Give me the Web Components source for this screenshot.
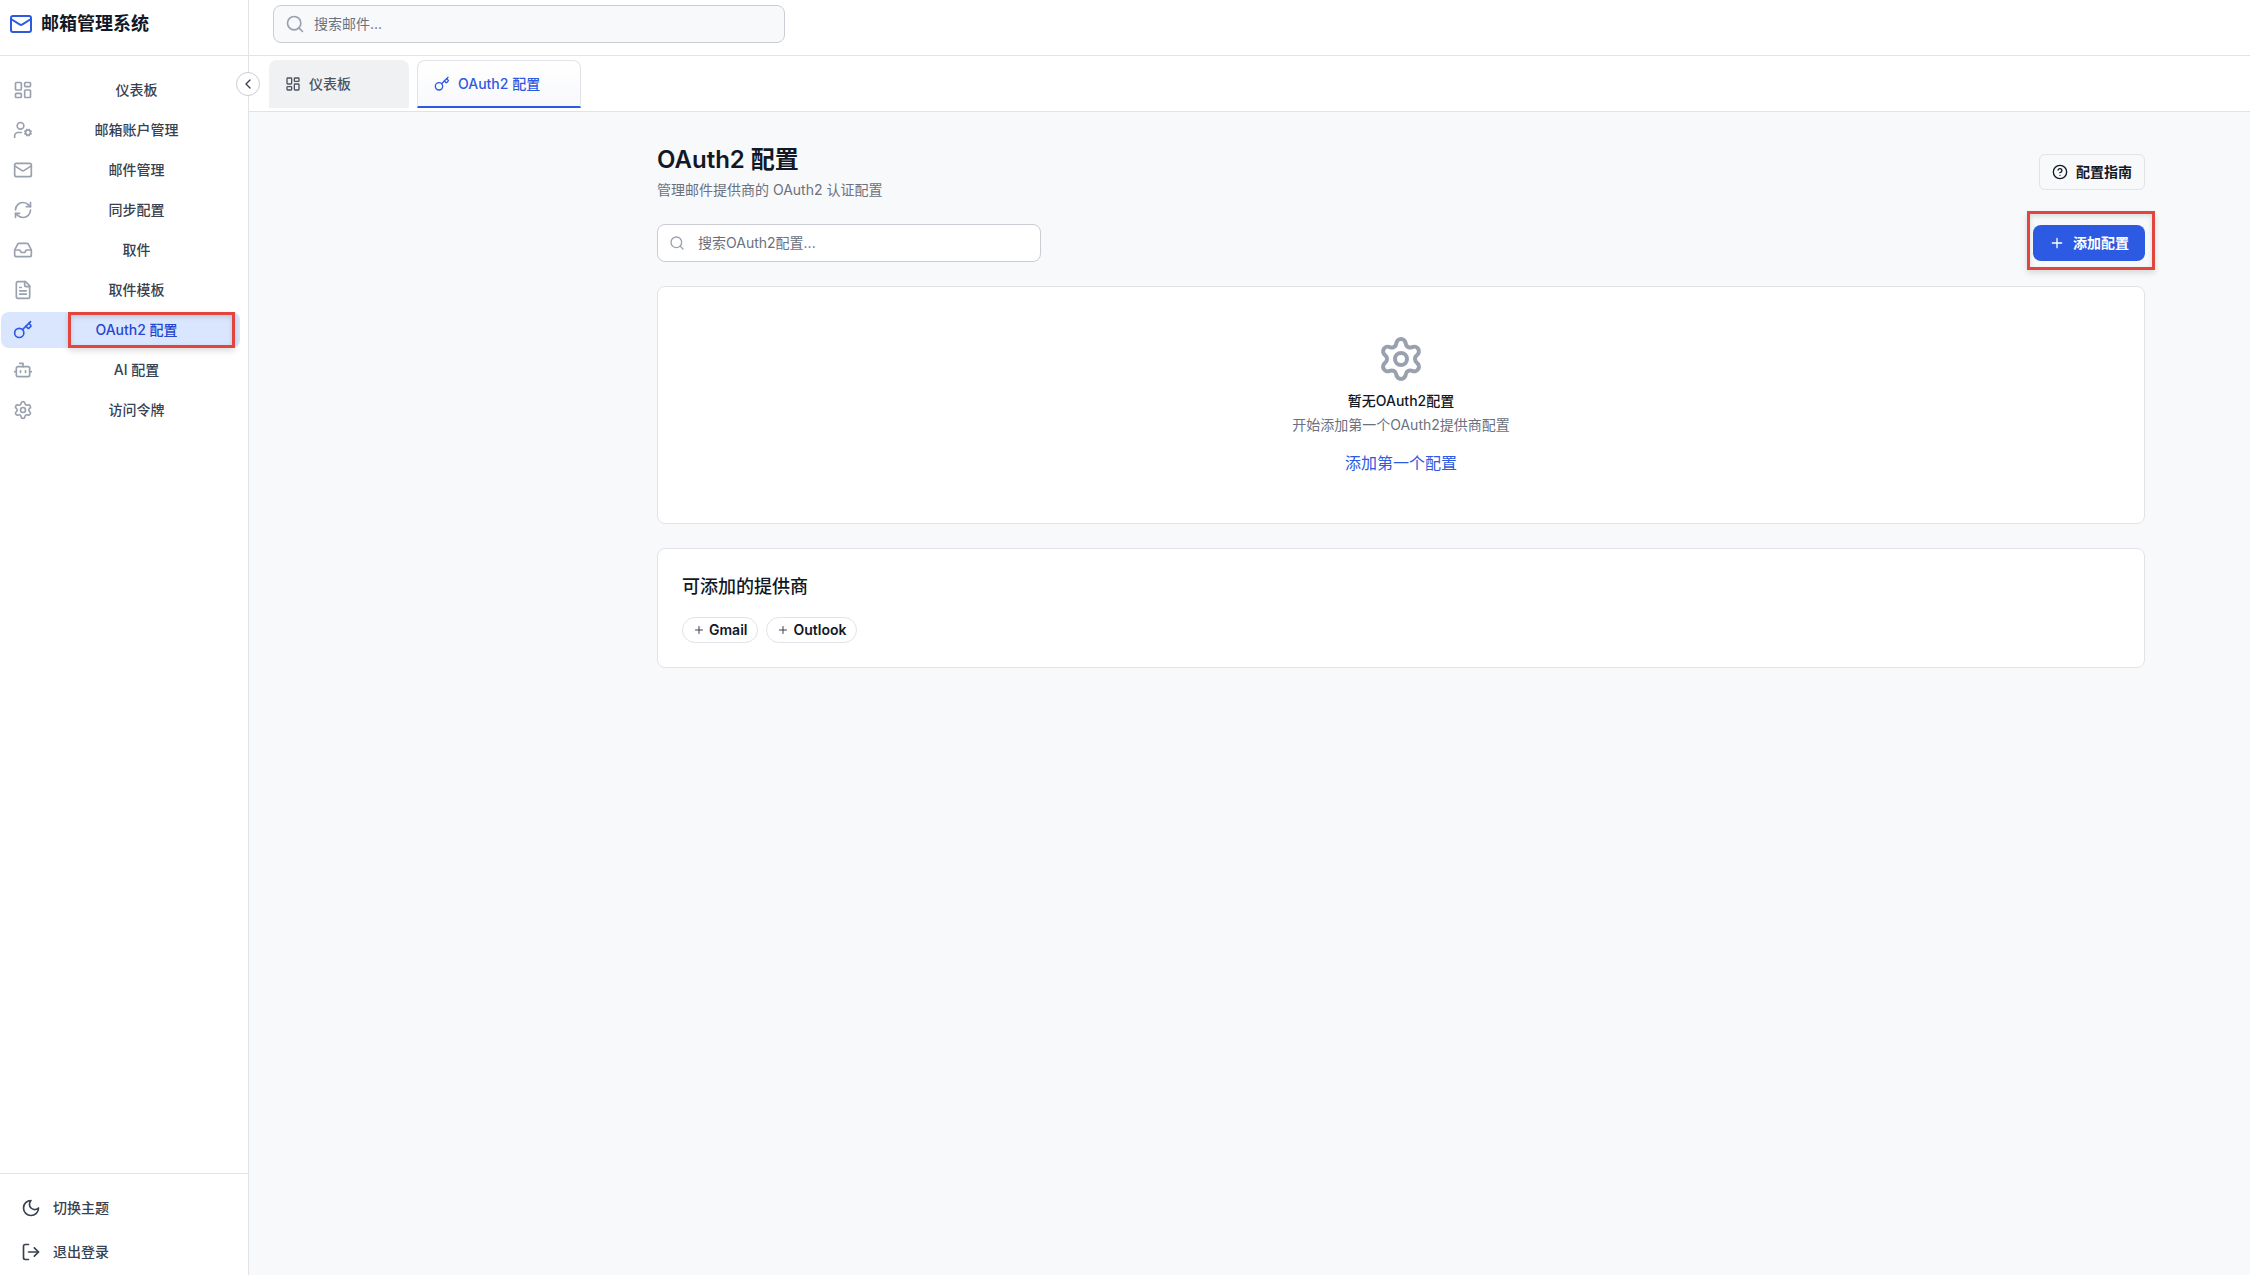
<!DOCTYPE html>
<html lang="zh-CN">
<head>
<meta charset="utf-8">
<title>邮箱管理系统</title>
<style>
  :root {
    --blue: #2d5ae2;
    --blue-deep: #2746d0;
    --blue-soft: #dae6fd;
    --ink: #121826;
    --ink-2: #384150;
    --ink-3: #6a7180;
    --ink-4: #9aa1ae;
    --line: #e2e3e8;
    --line-strong: #cbccd4;
    --ground: #f8f9fb;
    --mark: #e2443e;
  }
  body {
    margin: 0;
    font: 400 14px/20px Inter, "Noto Sans CJK SC", sans-serif;
    color: var(--ink);
    background: var(--ground);
  }
</style>
</head>
<body>
<mail-app></mail-app>
<script>
const ICONS = {
  mail: '<rect x="2" y="4" width="20" height="16" rx="2"/><path d="m22 7-8.97 5.7a1.94 1.94 0 0 1-2.06 0L2 7"/>',
  dashboard: '<rect x="3" y="3" width="7" height="9" rx="1"/><rect x="14" y="3" width="7" height="5" rx="1"/><rect x="14" y="12" width="7" height="9" rx="1"/><rect x="3" y="16" width="7" height="5" rx="1"/>',
  usercog: '<path d="M10 15H6a4 4 0 0 0-4 4v2"/><circle cx="9" cy="7" r="4"/><circle cx="18" cy="15" r="3"/><path d="m14.305 16.53.923-.382M15.228 13.852l-.923-.383M16.852 12.228l-.383-.923M16.852 17.772l-.383.924M19.148 12.228l.383-.923M19.53 18.696l-.382-.924M20.772 13.852l.924-.383M20.772 16.148l.924.383"/>',
  refresh: '<path d="M3 12a9 9 0 0 1 9-9 9.75 9.75 0 0 1 6.74 2.74L21 8"/><path d="M21 3v5h-5"/><path d="M21 12a9 9 0 0 1-9 9 9.75 9.75 0 0 1-6.74-2.74L3 16"/><path d="M8 16H3v5"/>',
  inbox: '<path d="M22 12h-6l-2 3h-4l-2-3H2"/><path d="M5.45 5.11 2 12v6a2 2 0 0 0 2 2h16a2 2 0 0 0 2-2v-6l-3.45-6.89A2 2 0 0 0 16.76 4H7.24a2 2 0 0 0-1.79 1.11z"/>',
  file: '<path d="M15 2H6a2 2 0 0 0-2 2v16a2 2 0 0 0 2 2h12a2 2 0 0 0 2-2V7Z"/><path d="M14 2v4a2 2 0 0 0 2 2h4"/><path d="M10 9H8M16 13H8M16 17H8"/>',
  key: '<path d="m15.5 7.5 2.3 2.3a1 1 0 0 0 1.4 0l2.1-2.1a1 1 0 0 0 0-1.4L19 4"/><path d="m21 2-9.6 9.6"/><circle cx="7.5" cy="15.5" r="5.5"/>',
  bot: '<path d="M12 8V4H8"/><rect x="4" y="8" width="16" height="12" rx="2"/><path d="M2 14h2M20 14h2M15 13v2M9 13v2"/>',
  gear: '<path d="M9.671 4.136a2.34 2.34 0 0 1 4.659 0 2.34 2.34 0 0 0 3.319 1.915 2.34 2.34 0 0 1 2.33 4.033 2.34 2.34 0 0 0 0 3.831 2.34 2.34 0 0 1-2.33 4.033 2.34 2.34 0 0 0-3.319 1.915 2.34 2.34 0 0 1-4.659 0 2.34 2.34 0 0 0-3.32-1.915 2.34 2.34 0 0 1-2.33-4.033 2.34 2.34 0 0 0 0-3.831A2.34 2.34 0 0 1 6.35 6.051a2.34 2.34 0 0 0 3.319-1.915"/><circle cx="12" cy="12" r="3"/>',
  search: '<circle cx="11" cy="11" r="8"/><path d="m21 21-4.34-4.34"/>',
  help: '<circle cx="12" cy="12" r="10"/><path d="M9.09 9a3 3 0 0 1 5.83 1c0 2-3 3-3 3"/><path d="M12 17h.01"/>',
  plus: '<path d="M5 12h14M12 5v14"/>',
  moon: '<path d="M12 3a6 6 0 0 0 9 9 9 9 0 1 1-9-9Z"/>',
  logout: '<path d="m16 17 5-5-5-5"/><path d="M21 12H9"/><path d="M9 21H5a2 2 0 0 1-2-2V5a2 2 0 0 1 2-2h4"/>',
  left: '<path d="m15 18-6-6 6-6"/>'
};

const BASE = `
  *, *::before, *::after { box-sizing: border-box; }
  button, input { font: inherit; color: inherit; margin: 0; }
  button { cursor: pointer; }
  h1, h2, h3, p { margin: 0; }
`;

function define(name, css, html) {
  customElements.define(name, class extends HTMLElement {
    constructor() {
      super();
      this.attachShadow({ mode: "open" });
    }
    connectedCallback() {
      const body = typeof html === "function" ? html(this) : html;
      this.shadowRoot.innerHTML = `<style>${BASE}${css}</style>${body}`;
    }
  });
}

define("ui-icon", `
  :host { display: block; flex: none; width: var(--size, 20px); height: var(--size, 20px); }
  svg { display: block; width: 100%; height: 100%; }
`, el => `<svg viewBox="0 0 24 24" fill="none" stroke="currentColor" stroke-width="2" stroke-linecap="round" stroke-linejoin="round" aria-hidden="true">${ICONS[el.getAttribute("name")]}</svg>`);

define("search-field", `
  :host { display: block; }
  label {
    display: flex; align-items: center; gap: var(--field-gap, 9px);
    height: 38px; padding: 0 11px;
    border: 1px solid var(--line-strong); border-radius: 8px;
    background: var(--field-bg, #fff);
  }
  ui-icon { color: var(--ink-4); --size: var(--field-icon, 20px); }
  input { flex: 1; min-width: 0; height: 36px; padding: 0 0 2px; border: 0; outline: 0; background: none; }
  input::placeholder { color: var(--ink-3); opacity: 1; }
`, el => `<label><ui-icon name="search"></ui-icon><input type="search" aria-label="${el.getAttribute("hint")}" placeholder="${el.getAttribute("hint")}"></label>`);

define("nav-item", `
  :host { display: block; position: relative; }
  a {
    display: flex; align-items: center; gap: 12px;
    height: 36px; padding: 0 12px; border-radius: 8px;
    color: var(--ink-2); font-weight: 500; text-decoration: none;
  }
  ui-icon { color: var(--ink-4); }
  span { flex: 1; text-align: center; }
  :host([active]) a { background: var(--blue-soft); color: var(--blue-deep); }
  :host([active]) ui-icon { color: var(--blue); }
  :host([active])::after {
    content: ""; position: absolute; inset: 0 5px 0 67px;
    border: 3px solid var(--mark); box-shadow: 0 3px 6px #0002, inset 0 2px 5px #0002;
    pointer-events: none;
  }
`, el => `<a href="#"><ui-icon name="${el.getAttribute("icon")}"></ui-icon><span><slot></slot></span></a>`);

define("side-action", `
  :host { display: block; }
  button {
    display: flex; align-items: center; gap: 12px; width: 100%;
    height: 44px; padding: 0 12px; border: 0; background: none;
    color: var(--ink-2); font-weight: 500;
  }
`, el => `<button type="button"><ui-icon name="${el.getAttribute("icon")}"></ui-icon><slot></slot></button>`);

define("side-bar", `
  :host { display: flex; flex-direction: column; position: relative; background: #fff; border-right: 1px solid var(--line); }
  header { display: flex; align-items: center; gap: 8px; height: 56px; padding: 0 9px 8px; border-bottom: 1px solid var(--line); }
  header ui-icon { --size: 24px; color: var(--blue); }
  header strong { font-size: 18px; line-height: 28px; font-weight: 700; }
  nav { flex: 1; display: flex; flex-direction: column; gap: 4px; padding: 16px 8px 16px 1px; }
  footer { padding: 12px 8px 1px 9px; border-top: 1px solid var(--line); }
  .fold {
    position: absolute; top: 72px; right: -12px; z-index: 2;
    display: grid; place-items: center; width: 24px; height: 24px; padding: 0;
    border: 1px solid var(--line-strong); border-radius: 50%; background: #fff; color: var(--ink-2);
  }
  .fold ui-icon { --size: 16px; }
`, `
  <header><ui-icon name="mail"></ui-icon><strong>邮箱管理系统</strong></header>
  <button class="fold" type="button" aria-label="收起"><ui-icon name="left"></ui-icon></button>
  <nav>
    <nav-item icon="dashboard">仪表板</nav-item>
    <nav-item icon="usercog">邮箱账户管理</nav-item>
    <nav-item icon="mail">邮件管理</nav-item>
    <nav-item icon="refresh">同步配置</nav-item>
    <nav-item icon="inbox">取件</nav-item>
    <nav-item icon="file">取件模板</nav-item>
    <nav-item icon="key" active>OAuth2 配置</nav-item>
    <nav-item icon="bot">AI 配置</nav-item>
    <nav-item icon="gear">访问令牌</nav-item>
  </nav>
  <footer>
    <side-action icon="moon">切换主题</side-action>
    <side-action icon="logout">退出登录</side-action>
  </footer>
`);

define("page-tab", `
  :host { display: block; }
  button {
    display: flex; align-items: center; gap: 8px;
    min-width: 140px; height: 48px; padding: 0 40px 0 16px;
    border: 0; border-radius: 8px 8px 0 0;
    background: #f0f1f3; color: #4c5462; font-weight: 500;
  }
  ui-icon { --size: 16px; }
  :host([active]) button {
    border: 1px solid var(--line); border-bottom: 2px solid var(--blue); color: var(--blue);
    background: linear-gradient(#fff, #f8f9fb);
  }
`, el => `<button type="button"><ui-icon name="${el.getAttribute("icon")}"></ui-icon><slot></slot></button>`);

define("top-bar", `
  :host { display: block; background: #fff; }
  .search { height: 56px; padding: 5px 24px 0; border-bottom: 1px solid var(--line); }
  search-field { max-width: 512px; --field-bg: var(--ground); }
  .tabs { display: flex; gap: 8px; height: 56px; padding: 4px 20px 0; border-bottom: 1px solid var(--line); }
`, `
  <div class="search"><search-field hint="搜索邮件..."></search-field></div>
  <div class="tabs">
    <page-tab icon="dashboard">仪表板</page-tab>
    <page-tab icon="key" active>OAuth2 配置</page-tab>
  </div>
`);

define("action-button", `
  :host { display: block; position: relative; }
  button {
    display: flex; align-items: center; gap: 8px; height: 36px;
    padding: 0 12px; border: 1px solid var(--line); border-radius: 6px;
    background: none; font-weight: 600; white-space: nowrap;
  }
  ui-icon { --size: 16px; }
  :host([primary]) button { padding: 0 16px; border: 0; border-radius: 8px; background: var(--blue); color: #fff; }
  :host([primary])::after {
    content: ""; position: absolute; inset: -14px -10px -9px -6px;
    border: 3px solid var(--mark); box-shadow: 0 3px 6px #0002, inset 0 2px 5px #0002;
    pointer-events: none;
  }
`, el => `<button type="button"><ui-icon name="${el.getAttribute("icon")}"></ui-icon><slot></slot></button>`);

define("provider-chip", `
  :host { display: block; }
  button {
    display: flex; align-items: center; gap: 4px; height: 26px; padding: 0 10px;
    border: 1px solid var(--line); border-radius: 13px; background: #fff; font-weight: 600;
  }
  ui-icon { --size: 12px; color: var(--ink-2); }
`, `<button type="button"><ui-icon name="plus"></ui-icon><slot></slot></button>`);

define("ui-card", `
  :host { display: block; background: #fff; border: 1px solid var(--line); border-radius: 8px; padding: var(--card-pad, 24px); }
`, `<slot></slot>`);

define("oauth-page", `
  :host { display: block; padding: 32px 0 32px clamp(0px, 14vw - 12px, 303px); }
  .wrap { max-width: 1536px; margin: 0 auto; padding: 0 24px; display: flex; flex-direction: column; gap: 24px; }
  .row { display: flex; align-items: center; justify-content: space-between; }
  h1 { font-size: 24px; line-height: 32px; font-weight: 600; }
  .row p { margin-top: 4px; color: var(--ink-3); }
  search-field { width: 384px; --field-icon: 16px; --field-gap: 13px; }
  .empty { --card-pad: 48px; }
  .empty div { display: flex; flex-direction: column; align-items: center; }
  .empty ui-icon { --size: 48px; color: var(--ink-4); }
  h3 { margin-top: 8px; font-size: 14px; line-height: 20px; font-weight: 500; }
  .empty p { margin-top: 4px; color: var(--ink-3); }
  .link { margin-top: 16px; padding: 0; border: 0; background: none; font-size: 16px; line-height: 24px; color: var(--blue); }
  h2 { font-size: 18px; line-height: 28px; font-weight: 500; }
  .chips { display: flex; gap: 8px; margin-top: 16px; }
`, `
  <div class="wrap">
    <div class="row">
      <div><h1>OAuth2 配置</h1><p>管理邮件提供商的 OAuth2 认证配置</p></div>
      <action-button icon="help">配置指南</action-button>
    </div>
    <div class="row">
      <search-field hint="搜索OAuth2配置..."></search-field>
      <action-button icon="plus" primary>添加配置</action-button>
    </div>
    <ui-card class="empty"><div>
      <ui-icon name="gear"></ui-icon>
      <h3>暂无OAuth2配置</h3>
      <p>开始添加第一个OAuth2提供商配置</p>
      <button class="link" type="button">添加第一个配置</button>
    </div></ui-card>
    <ui-card>
      <h2>可添加的提供商</h2>
      <div class="chips"><provider-chip>Gmail</provider-chip><provider-chip>Outlook</provider-chip></div>
    </ui-card>
  </div>
`);

define("mail-app", `
  :host { display: flex; min-height: 100vh; }
  side-bar { flex: 0 0 249px; }
  main { flex: 1; min-width: 0; }
`, `<side-bar></side-bar><main><top-bar></top-bar><oauth-page></oauth-page></main>`);
</script>
</body>
</html>
